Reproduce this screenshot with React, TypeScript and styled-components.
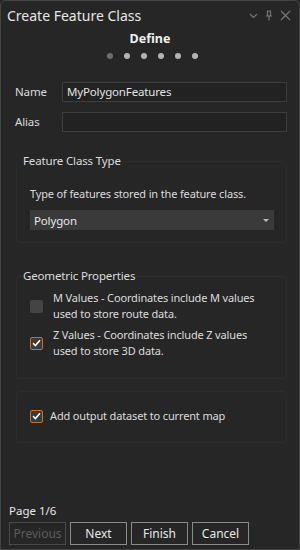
import React from "react";
import styled, { createGlobalStyle } from "styled-components";

const Global = createGlobalStyle`
  html, body { margin: 0; padding: 0; background: #262626; }
  * { box-sizing: border-box; }
  body { font-family: "Noto Sans", "Open Sans", sans-serif; color: #dedede; }
`;

const Window = styled.div`
  width: 300px;
  height: 550px;
  background: #262626;
  border: 1px solid #444;
  border-radius: 5px 5px 0 0;
  display: flex;
  flex-direction: column;
  overflow: hidden;
`;

const TitleBar = styled.div`
  height: 29px;
  display: flex;
  align-items: center;
  padding: 0 8px 0 6px;
`;

const Title = styled.div`
  flex: 1;
  font-size: 14px;
  line-height: 20px;
  color: #e6e6e6;
`;

const TitleIcons = styled.div`
  display: flex;
  align-items: center;
  gap: 7px;
  color: #777;
`;

const Heading = styled.div`
  text-align: center;
  font-weight: 700;
  font-size: 12.5px;
  line-height: 17px;
  color: #f0f0f0;
`;

const Dots = styled.div`
  display: flex;
  justify-content: center;
  gap: 11px;
  margin-top: 6px;
  padding-left: 5px;
  height: 6px;
`;

const Dot = styled.span<{ $active?: boolean }>`
  width: 6px;
  height: 6px;
  border-radius: 50%;
  background: ${(p) => (p.$active ? "#6e6e6e" : "#b4b4b4")};
`;

const Body = styled.div`
  flex: 1;
  display: flex;
  flex-direction: column;
  padding: 0 12px 0 14px;
  font-size: 11px;
  letter-spacing: -0.15px;
`;

const FieldRow = styled.div<{ $top: number }>`
  display: flex;
  align-items: center;
  margin-top: ${(p) => p.$top}px;
`;

const FieldLabel = styled.label`
  width: 47px;
  font-size: 11.5px;
  line-height: 16px;
  color: #dcdcdc;
`;

const TextInput = styled.div`
  flex: 1;
  height: 20px;
  border: 1px solid #3e3e3e;
  background: #222;
  font-size: 11.5px;
  line-height: 18px;
  padding: 0 4px;
  color: #e4e4e4;
`;

const Group = styled.fieldset<{ $top: number }>`
  margin: ${(p) => p.$top}px 0 0 1px;
  padding: 0;
  border: 1px solid #2c2c2c;
  border-radius: 4px;
  min-width: 0;
`;

const Legend = styled.legend`
  font-size: 11.5px;
  line-height: 16px;
  padding: 0;
  margin-left: 6px;
  color: #dcdcdc;
`;

const GroupContent = styled.div<{ $pt: number; $pb: number }>`
  padding: ${(p) => p.$pt}px 13px ${(p) => p.$pb}px 13px;
  display: flex;
  flex-direction: column;
`;

const Description = styled.div`
  line-height: 16px;
  color: #dcdcdc;
`;

const Select = styled.div`
  margin-top: 8px;
  height: 20px;
  background: #3a3a3a;
  display: flex;
  align-items: center;
  justify-content: space-between;
  padding: 0 5px 0 4px;
  color: #e8e8e8;
  width: 244px;
  font-size: 11.5px;
`;

const Caret = styled.span`
  width: 0;
  height: 0;
  border-left: 3px solid transparent;
  border-right: 3px solid transparent;
  border-top: 3px solid #bdbdbd;
`;

const CheckRow = styled.div<{ $top?: number; $gap: number }>`
  display: flex;
  align-items: center;
  gap: ${(p) => p.$gap}px;
  margin-top: ${(p) => p.$top ?? 0}px;
`;

const Box = styled.span<{ $checked?: boolean }>`
  flex: none;
  width: 13px;
  height: 13px;
  border-radius: 2px;
  display: flex;
  align-items: center;
  justify-content: center;
  background: ${(p) => (p.$checked ? "#3a3a3a" : "#444")};
  border: ${(p) => (p.$checked ? "1.3px solid #c8702e" : "none")};
`;

const CheckText = styled.div`
  line-height: 16px;
  color: #dcdcdc;
`;

const Footer = styled.div`
  padding: 0 8px 4px 8px;
  display: flex;
  flex-direction: column;
  gap: 3px;
`;

const PageLabel = styled.div`
  font-size: 11.5px;
  line-height: 16px;
  color: #e6e6e6;
`;

const Buttons = styled.div`
  display: flex;
  gap: 4px;
`;

const Button = styled.button<{ $disabled?: boolean }>`
  width: 57px;
  height: 23px;
  background: #262626;
  border: 1px solid ${(p) => (p.$disabled ? "#4a4a4a" : "#8a8a8a")};
  color: ${(p) => (p.$disabled ? "#5c5c5c" : "#e8e8e8")};
  font-family: inherit;
  font-size: 12px;
  padding: 0;
`;

const Check = () => (
  <svg width="9" height="8" viewBox="0 0 9 8">
    <path d="M1 4.2 L3.4 6.5 L8 1.3" fill="none" stroke="#fff" strokeWidth="1.6" />
  </svg>
);

const CheckBox = ({ checked }: { checked?: boolean }) => (
  <Box $checked={checked}>{checked && <Check />}</Box>
);

export default function App() {
  return (
    <>
      <Global />
      <Window>
        <TitleBar>
          <Title>Create Feature Class</Title>
          <TitleIcons>
            <svg width="9" height="6" viewBox="0 0 9 6">
              <path d="M1 1 L4.5 4.5 L8 1" fill="none" stroke="#777" strokeWidth="1.2" />
            </svg>
            <svg width="8" height="11" viewBox="0 0 8 11">
              <path d="M2 1 H6 M2.5 1 V6 M5.5 1 V6 M1 6 H7 M4 6 V10.5" fill="none" stroke="#777" strokeWidth="1.2" />
            </svg>
            <svg width="11" height="11" viewBox="0 0 11 11">
              <path d="M1 1 L10 10 M10 1 L1 10" fill="none" stroke="#777" strokeWidth="1.2" />
            </svg>
          </TitleIcons>
        </TitleBar>
        <Heading>Define</Heading>
        <Dots>
          <Dot $active />
          <Dot />
          <Dot />
          <Dot />
          <Dot />
          <Dot />
        </Dots>
        <Body>
          <FieldRow $top={23}>
            <FieldLabel>Name</FieldLabel>
            <TextInput>MyPolygonFeatures</TextInput>
          </FieldRow>
          <FieldRow $top={10}>
            <FieldLabel>Alias</FieldLabel>
            <TextInput />
          </FieldRow>
          <Group $top={21}>
            <Legend>Feature Class Type</Legend>
            <GroupContent $pt={17} $pb={12}>
              <Description>Type of features stored in the feature class.</Description>
              <Select>
                <span>Polygon</span>
                <Caret />
              </Select>
            </GroupContent>
          </Group>
          <Group $top={25}>
            <Legend>Geometric Properties</Legend>
            <GroupContent $pt={6} $pb={19}>
              <CheckRow $gap={10}>
                <CheckBox />
                <CheckText>
                  M Values - Coordinates include M values
                  <br />
                  used to store route data.
                </CheckText>
              </CheckRow>
              <CheckRow $gap={10} $top={5}>
                <CheckBox checked />
                <CheckText>
                  Z Values - Coordinates include Z values
                  <br />
                  used to store 3D data.
                </CheckText>
              </CheckRow>
            </GroupContent>
          </Group>
          <Group $top={12}>
            <GroupContent $pt={16} $pb={18}>
              <CheckRow $gap={7}>
                <CheckBox checked />
                <CheckText>Add output dataset to current map</CheckText>
              </CheckRow>
            </GroupContent>
          </Group>
        </Body>
        <Footer>
          <PageLabel>Page 1/6</PageLabel>
          <Buttons>
            <Button $disabled>Previous</Button>
            <Button>Next</Button>
            <Button>Finish</Button>
            <Button>Cancel</Button>
          </Buttons>
        </Footer>
      </Window>
    </>
  );
}
